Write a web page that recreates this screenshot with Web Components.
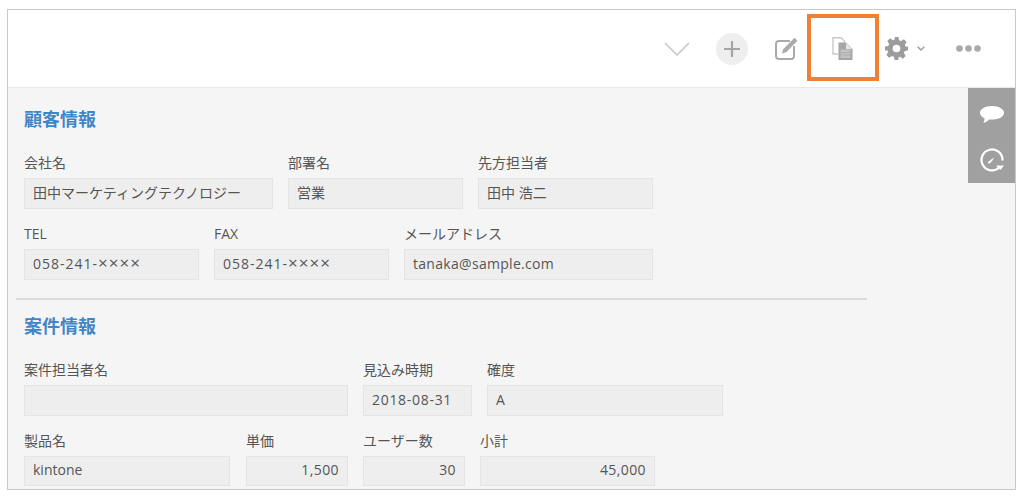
<!DOCTYPE html>
<html lang="ja">
<head>
<meta charset="utf-8">
<title>kintone</title>
<style>
html, body { margin: 0; background: #fff; }
body { font-family: "Open Sans", "Noto Sans CJK JP", sans-serif; color: #555; }
.tel { letter-spacing: 1px; }
.x { font-size: 17px; line-height: 1; letter-spacing: 1px; }
.wide { letter-spacing: .3px; }
.date { letter-spacing: .7px; }
.num { letter-spacing: .4px; }
</style>
</head>
<body>
<kt-record>
  <kt-toolbar slot="toolbar"></kt-toolbar>
  <kt-sidebar slot="sidebar"></kt-sidebar>
  <kt-section heading="顧客情報" divider>
    <kt-row>
      <kt-field label="会社名" size="249">田中マーケティングテクノロジー</kt-field>
      <kt-field label="部署名" size="175">営業</kt-field>
      <kt-field label="先方担当者" size="175">田中 浩二</kt-field>
    </kt-row>
    <kt-row>
      <kt-field label="TEL" size="175"><span class="tel">058-241-</span><span class="x">××××</span></kt-field>
      <kt-field label="FAX" size="175"><span class="tel">058-241-</span><span class="x">××××</span></kt-field>
      <kt-field label="メールアドレス" size="249"><span class="wide">tanaka@sample.com</span></kt-field>
    </kt-row>
  </kt-section>
  <kt-section heading="案件情報">
    <kt-row>
      <kt-field label="案件担当者名" size="324"></kt-field>
      <kt-field label="見込み時期" size="109"><span class="date">2018-08-31</span></kt-field>
      <kt-field label="確度" size="236">A</kt-field>
    </kt-row>
    <kt-row>
      <kt-field label="製品名" size="206" tall="30" style="margin-right:1px">kintone</kt-field>
      <kt-field label="単価" size="102" tall="30" numeric><span class="num">1,500</span></kt-field>
      <kt-field label="ユーザー数" size="102" tall="30" numeric><span class="num">30</span></kt-field>
      <kt-field label="小計" size="175" tall="30" numeric><span class="num">45,000</span></kt-field>
    </kt-row>
  </kt-section>
</kt-record>

<script>
class KtRecord extends HTMLElement {
    constructor(){
        super();
        this.attachShadow({mode: 'open'});
    }
    connectedCallback(){
        this.shadowRoot.innerHTML = `
        <style>
        :host{
            display: block;
            box-sizing: border-box;
            width: 1009px;
            height: 481px;
            margin: 9px 0 0 7px;
            border: 1px solid #c9c9c9;
            overflow: hidden;
        }
        .body{
            position: relative;
            height: 402px;
            padding: 19px 0 0 8px;
            box-sizing: border-box;
            background: #f5f5f5;
        }
        </style>
        <slot name="toolbar"></slot>
        <div class="body">
            <slot name="sidebar"></slot>
            <slot></slot>
        </div>
        `;
    }
}
customElements.define('kt-record', KtRecord);

class KtToolbar extends HTMLElement {
    constructor(){
        super();
        this.attachShadow({mode: 'open'});
    }
    connectedCallback(){
        this.shadowRoot.innerHTML = `
        <style>
        :host{
            display: flex;
            align-items: center;
            justify-content: flex-end;
            box-sizing: border-box;
            height: 78px;
            padding-right: 34px;
            background: #fff;
            border-bottom: 1px solid #e8e8e8;
        }
        svg{ display: block; flex: none; }
        .copy{ position: relative; margin-left: 34px; }
        .mark{
            position: absolute;
            left: -25px;
            top: -23px;
            box-sizing: border-box;
            width: 72px;
            height: 67px;
            border: 4px solid #f08033;
        }
        </style>
        <svg width="26" height="14" viewBox="0 0 26 14" style="margin-right:26px"><path d="M1 1l12 12L25 1" fill="none" stroke="#c8c8c8" stroke-width="1.6"/></svg>
        <svg width="32" height="32" viewBox="0 0 32 32" style="margin-right:27px"><circle cx="16" cy="16" r="16" fill="#eee"/><path d="M8 16h16M16 8v16" stroke="#a6a6a6" stroke-width="2.2"/></svg>
        <svg width="23" height="23" viewBox="0 0 23 23"><path d="M15 4H4a3 3 0 0 0-3 3v12a3 3 0 0 0 3 3h12a3 3 0 0 0 3-3V9" fill="none" stroke="#aaa" stroke-width="2"/><path d="M19.500 .8l3 3-11.300 11.400-4.200 1.200 1.200-4.200z" fill="#aaa"/></svg>
        <div class="copy">
            <svg width="21" height="23" viewBox="0 0 21 23"><path d="M6 17H1V.7h8l3.500 3.500V6" fill="#fff" stroke="#c8c8c8" stroke-width="1.400"/><path d="M6.500 5.500h7.500l6.500 6.500v11h-14z" fill="#a6a6a6"/><path d="M14 6v6h6" fill="#e6e6e6"/><path d="M8.500 12.500h10v8.500h-10z" fill="#c2c2c2"/><path d="M8.500 15.500h10M8.500 18h10" stroke="#a6a6a6" stroke-width=".7"/></svg>
            <div class="mark"></div>
        </div>
        <svg width="23" height="23" viewBox="0 0 24 24" style="margin-left:32px"><path fill="#9c9c9c" fill-rule="evenodd" d="M10 0h4l.7 3.400 2.100.9 2.900-1.900 2.900 2.900-1.900 2.900.9 2.100L24 10v4l-3.400.7-.9 2.100 1.900 2.900-2.900 2.900-2.900-1.900-2.100.9L14 24h-4l-.7-3.400-2.100-.9-2.900 1.900-2.900-2.900 1.900-2.900-.9-2.100L0 14v-4l3.400-.7.9-2.100-1.900-2.900 2.900-2.900 2.900 1.900 2.100-.9zM12 8a4 4 0 1 0 0 8 4 4 0 0 0 0-8z"/></svg>
        <svg width="8" height="5" viewBox="0 0 8 5" style="margin-left:9px"><path d="M.7.7L4 4 7.300.7" fill="none" stroke="#999" stroke-width="1.300"/></svg>
        <svg width="25" height="7" viewBox="0 0 25 7" style="margin-left:31px"><circle cx="3.500" cy="3.500" r="3.300" fill="#aaa"/><circle cx="12.500" cy="3.500" r="3.300" fill="#aaa"/><circle cx="21.500" cy="3.500" r="3.300" fill="#aaa"/></svg>
        `;
    }
}
customElements.define('kt-toolbar', KtToolbar);

class KtSidebar extends HTMLElement {
    constructor(){
        super();
        this.attachShadow({mode: 'open'});
    }
    connectedCallback(){
        this.shadowRoot.innerHTML = `
        <style>
        :host{
            position: absolute;
            top: 0;
            right: 0;
            display: flex;
            flex-direction: column;
            align-items: center;
            gap: 25px;
            box-sizing: border-box;
            width: 47px;
            height: 95px;
            padding-top: 18px;
            background: #a0a0a0;
        }
        svg{ display: block; }
        </style>
        <svg width="24" height="17" viewBox="0 0 24 17"><path fill="#fff" d="M12 0c6.600 0 12 2.800 12 6.800s-5.400 6.800-12 6.800c-1 0-2 0-3-.2C7.500 15 5.500 16.500 3 17c1-1.200 1.600-2.800 1.600-4.600C1.800 11.200 0 9.200 0 6.800 0 2.800 5.400 0 12 0z"/></svg>
        <svg width="24" height="24" viewBox="0 0 24 24"><path d="M19.500 19.300A10.500 10.500 0 1 1 22.500 12.500" fill="none" stroke="#fff" stroke-width="2.200"/><path d="M7.500 14.500l3.300-2.800 3.400-2.200-2 3.200-2.800 3z" fill="#fff"/><path d="M16 17.500h8L20.500 22z" fill="#fff"/></svg>
        `;
    }
}
customElements.define('kt-sidebar', KtSidebar);

class KtSection extends HTMLElement {
    constructor(){
        super();
        this.attachShadow({mode: 'open'});
    }
    connectedCallback(){
        const line = this.hasAttribute('divider') ? '<hr>' : '';
        this.shadowRoot.innerHTML = `
        <style>
        :host{ display: block; }
        h2{
            margin: 0 0 22px 8px;
            font-size: 18px;
            line-height: 24px;
            font-weight: 700;
            color: #3f86c8;
        }
        .rows{
            display: flex;
            flex-direction: column;
            gap: 15px;
            padding-left: 8px;
        }
        hr{
            width: 851px;
            height: 2px;
            margin: 18px 0 14px;
            border: 0;
            background: #dadada;
        }
        </style>
        <h2>${this.getAttribute('heading')}</h2>
        <div class="rows"><slot></slot></div>
        ${line}
        `;
    }
}
customElements.define('kt-section', KtSection);

class KtRow extends HTMLElement {
    constructor(){
        super();
        this.attachShadow({mode: 'open'});
    }
    connectedCallback(){
        this.shadowRoot.innerHTML = `
        <style>
        :host{ display: flex; gap: 15px; }
        </style>
        <slot></slot>
        `;
    }
}
customElements.define('kt-row', KtRow);

class KtField extends HTMLElement {
    constructor(){
        super();
        this.attachShadow({mode: 'open'});
    }
    connectedCallback(){
        const tall = Number(this.getAttribute('tall') || 31);
        this.shadowRoot.innerHTML = `
        <style>
        :host{
            display: block;
            width: ${this.getAttribute('size')}px;
            font-size: 14px;
            color: #555;
        }
        .label{
            height: 20px;
            margin-bottom: 5px;
            line-height: 20px;
            white-space: nowrap;
        }
        .value{
            box-sizing: border-box;
            height: ${tall}px;
            padding: 0 8px;
            line-height: ${tall - 4}px;
            text-align: ${this.hasAttribute('numeric') ? 'right' : 'left'};
            white-space: nowrap;
            background: #eee;
            border: 1px solid #e4e4e4;
        }
        </style>
        <div class="label">${this.getAttribute('label')}</div>
        <div class="value"><slot></slot></div>
        `;
    }
}
customElements.define('kt-field', KtField);
</script>
</body>
</html>
